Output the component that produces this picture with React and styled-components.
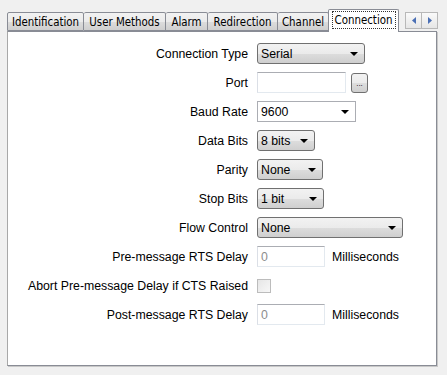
import React from 'react';
import styled, { createGlobalStyle } from 'styled-components';

const GlobalStyle = createGlobalStyle`
  body {
    margin: 0;
    background: #f0f0f0;
    font-family: "Liberation Sans", Arial, sans-serif;
    font-size: 12px;
    color: #000;
  }
`;

const Window = styled.div`
  width: 447px;
  height: 375px;
  padding: 9px 0 0 7px;
  box-sizing: border-box;
`;

const TabStrip = styled.div`
  display: flex;
  align-items: flex-end;
  height: 22px;
  position: relative;
  z-index: 1;
`;

const Tab = styled.div`
  box-sizing: border-box;
  width: ${p => p.w}px;
  height: ${p => (p.active ? 23 : 19)}px;
  margin-bottom: ${p => (p.active ? -1 : 0)}px;
  margin-left: ${p => (p.active ? -1 : 0)}px;
  border: 1px solid #898c95;
  border-left: ${p => (p.first || p.active ? '1px solid #898c95' : 'none')};
  border-bottom: ${p => (p.active ? 'none' : '1px solid #898c95')};
  border-radius: 2px 2px 0 0;
  background: ${p =>
    p.active ? '#fff' : 'linear-gradient(#f2f2f2, #ebebeb 50%, #dddddd 51%, #cfcfcf)'};
  font-family: "DejaVu Sans Condensed", "DejaVu Sans", sans-serif;
  font-size: 11.4px;
  display: flex;
  align-items: center;
  justify-content: center;
  padding-bottom: ${p => (p.active ? 3 : 0)}px;
  white-space: nowrap;
`;

const FocusText = styled.span`
  outline: 1px dotted #333;
  outline-offset: 1px;
  padding: 0 1px;
`;

const Scroller = styled.div`
  display: flex;
  margin-left: 6px;
  margin-bottom: 2px;
  border: 1px solid #b8b8b8;
  height: 15px;
`;

const ScrollBtn = styled.div`
  width: 15px;
  display: flex;
  align-items: center;
  justify-content: center;
  background: linear-gradient(#fafafa, #e6e6e6);
  & + & {
    border-left: 1px solid #b8b8b8;
  }
`;

const Panel = styled.div`
  width: 430px;
  height: 335px;
  box-sizing: border-box;
  background: #fff;
  border: 1px solid #898c95;
  border-left-color: #a8a8a8;
  box-shadow: 1px 1px 0 #c8c8c8;
  padding-top: 11px;
`;

const Form = styled.div`
  display: grid;
  grid-template-columns: 240px auto;
  column-gap: 9px;
  row-gap: 8px;
  grid-auto-rows: 21px;
  font-size: 12.3px;
`;

const Label = styled.div`
  text-align: right;
  align-self: center;
  white-space: nowrap;
`;

const Cell = styled.div`
  display: flex;
  align-items: center;
  gap: ${p => p.gap || 0}px;
`;

const Combo = styled.div`
  box-sizing: border-box;
  width: ${p => p.w}px;
  height: 21px;
  border: 1px solid ${p => (p.editable ? '#abadb3' : '#707070')};
  border-radius: ${p => (p.editable ? 0 : 3)}px;
  background: ${p => (p.editable ? '#fff' : 'linear-gradient(#f2f2f2, #ebebeb 50%, #dddddd 51%, #cfcfcf)')};
  display: flex;
  align-items: center;
  justify-content: space-between;
  padding: 0 6px 0 3px;
`;

const Arrow = () => (
  <svg width="8" height="4" viewBox="0 0 8 4">
    <path d="M0 0h8L4 4z" fill="#000" />
  </svg>
);

const TextBox = styled.div`
  box-sizing: border-box;
  width: ${p => p.w}px;
  height: 21px;
  border: 1px solid #e3e9ef;
  border-top-color: #abadb3;
  border-left-color: #dbdfe6;
  background: #fff;
  color: #8d8d8d;
  padding: 1px 3px 0;
  display: flex;
  align-items: center;
`;

const Browse = styled.div`
  box-sizing: border-box;
  width: 17px;
  height: 20px;
  border: 1px solid #707070;
  border-radius: 3px;
  background: linear-gradient(#f2f2f2, #ebebeb 50%, #dddddd 51%, #cfcfcf);
  font-size: 8px;
  display: flex;
  align-items: flex-end;
  justify-content: center;
  padding-bottom: 4px;
  line-height: 1;
`;

const CheckBox = styled.div`
  box-sizing: border-box;
  width: 14px;
  height: 14px;
  border: 1px solid #bcbcbc;
  background: linear-gradient(135deg, #e6e6e6, #f7f7f7);
`;

const Unit = styled.span`
  margin-left: 7px;
`;

const tabs = [
  { name: 'Identification', w: 77 },
  { name: 'User Methods', w: 82 },
  { name: 'Alarm', w: 42 },
  { name: 'Redirection', w: 70 },
  { name: 'Channel', w: 51 },
];

export default function App() {
  return (
    <Window>
      <GlobalStyle />
      <TabStrip>
        {tabs.map((t, i) => (
          <Tab key={t.name} w={t.w} first={i === 0}>{t.name}</Tab>
        ))}
        <Tab active w={71}><FocusText>Connection</FocusText></Tab>
        <Scroller>
          <ScrollBtn>
            <svg width="4" height="7" viewBox="0 0 4 7"><path d="M4 0v7L0 3.5z" fill="#4a6fb5" /></svg>
          </ScrollBtn>
          <ScrollBtn>
            <svg width="4" height="7" viewBox="0 0 4 7"><path d="M0 0v7l4-3.5z" fill="#4a6fb5" /></svg>
          </ScrollBtn>
        </Scroller>
      </TabStrip>
      <Panel>
        <Form>
          <Label>Connection Type</Label>
          <Cell><Combo w={108}>Serial<Arrow /></Combo></Cell>

          <Label>Port</Label>
          <Cell gap={5}><TextBox w={89} /><Browse>...</Browse></Cell>

          <Label>Baud Rate</Label>
          <Cell><Combo editable w={99}>9600<Arrow /></Combo></Cell>

          <Label>Data Bits</Label>
          <Cell><Combo w={58}>8 bits<Arrow /></Combo></Cell>

          <Label>Parity</Label>
          <Cell><Combo w={66}>None<Arrow /></Combo></Cell>

          <Label>Stop Bits</Label>
          <Cell><Combo w={67}>1 bit<Arrow /></Combo></Cell>

          <Label>Flow Control</Label>
          <Cell><Combo w={146}>None<Arrow /></Combo></Cell>

          <Label>Pre-message RTS Delay</Label>
          <Cell><TextBox w={68}>0</TextBox><Unit>Milliseconds</Unit></Cell>

          <Label>Abort Pre-message Delay if CTS Raised</Label>
          <Cell><CheckBox /></Cell>

          <Label>Post-message RTS Delay</Label>
          <Cell><TextBox w={68}>0</TextBox><Unit>Milliseconds</Unit></Cell>
        </Form>
      </Panel>
    </Window>
  );
}
